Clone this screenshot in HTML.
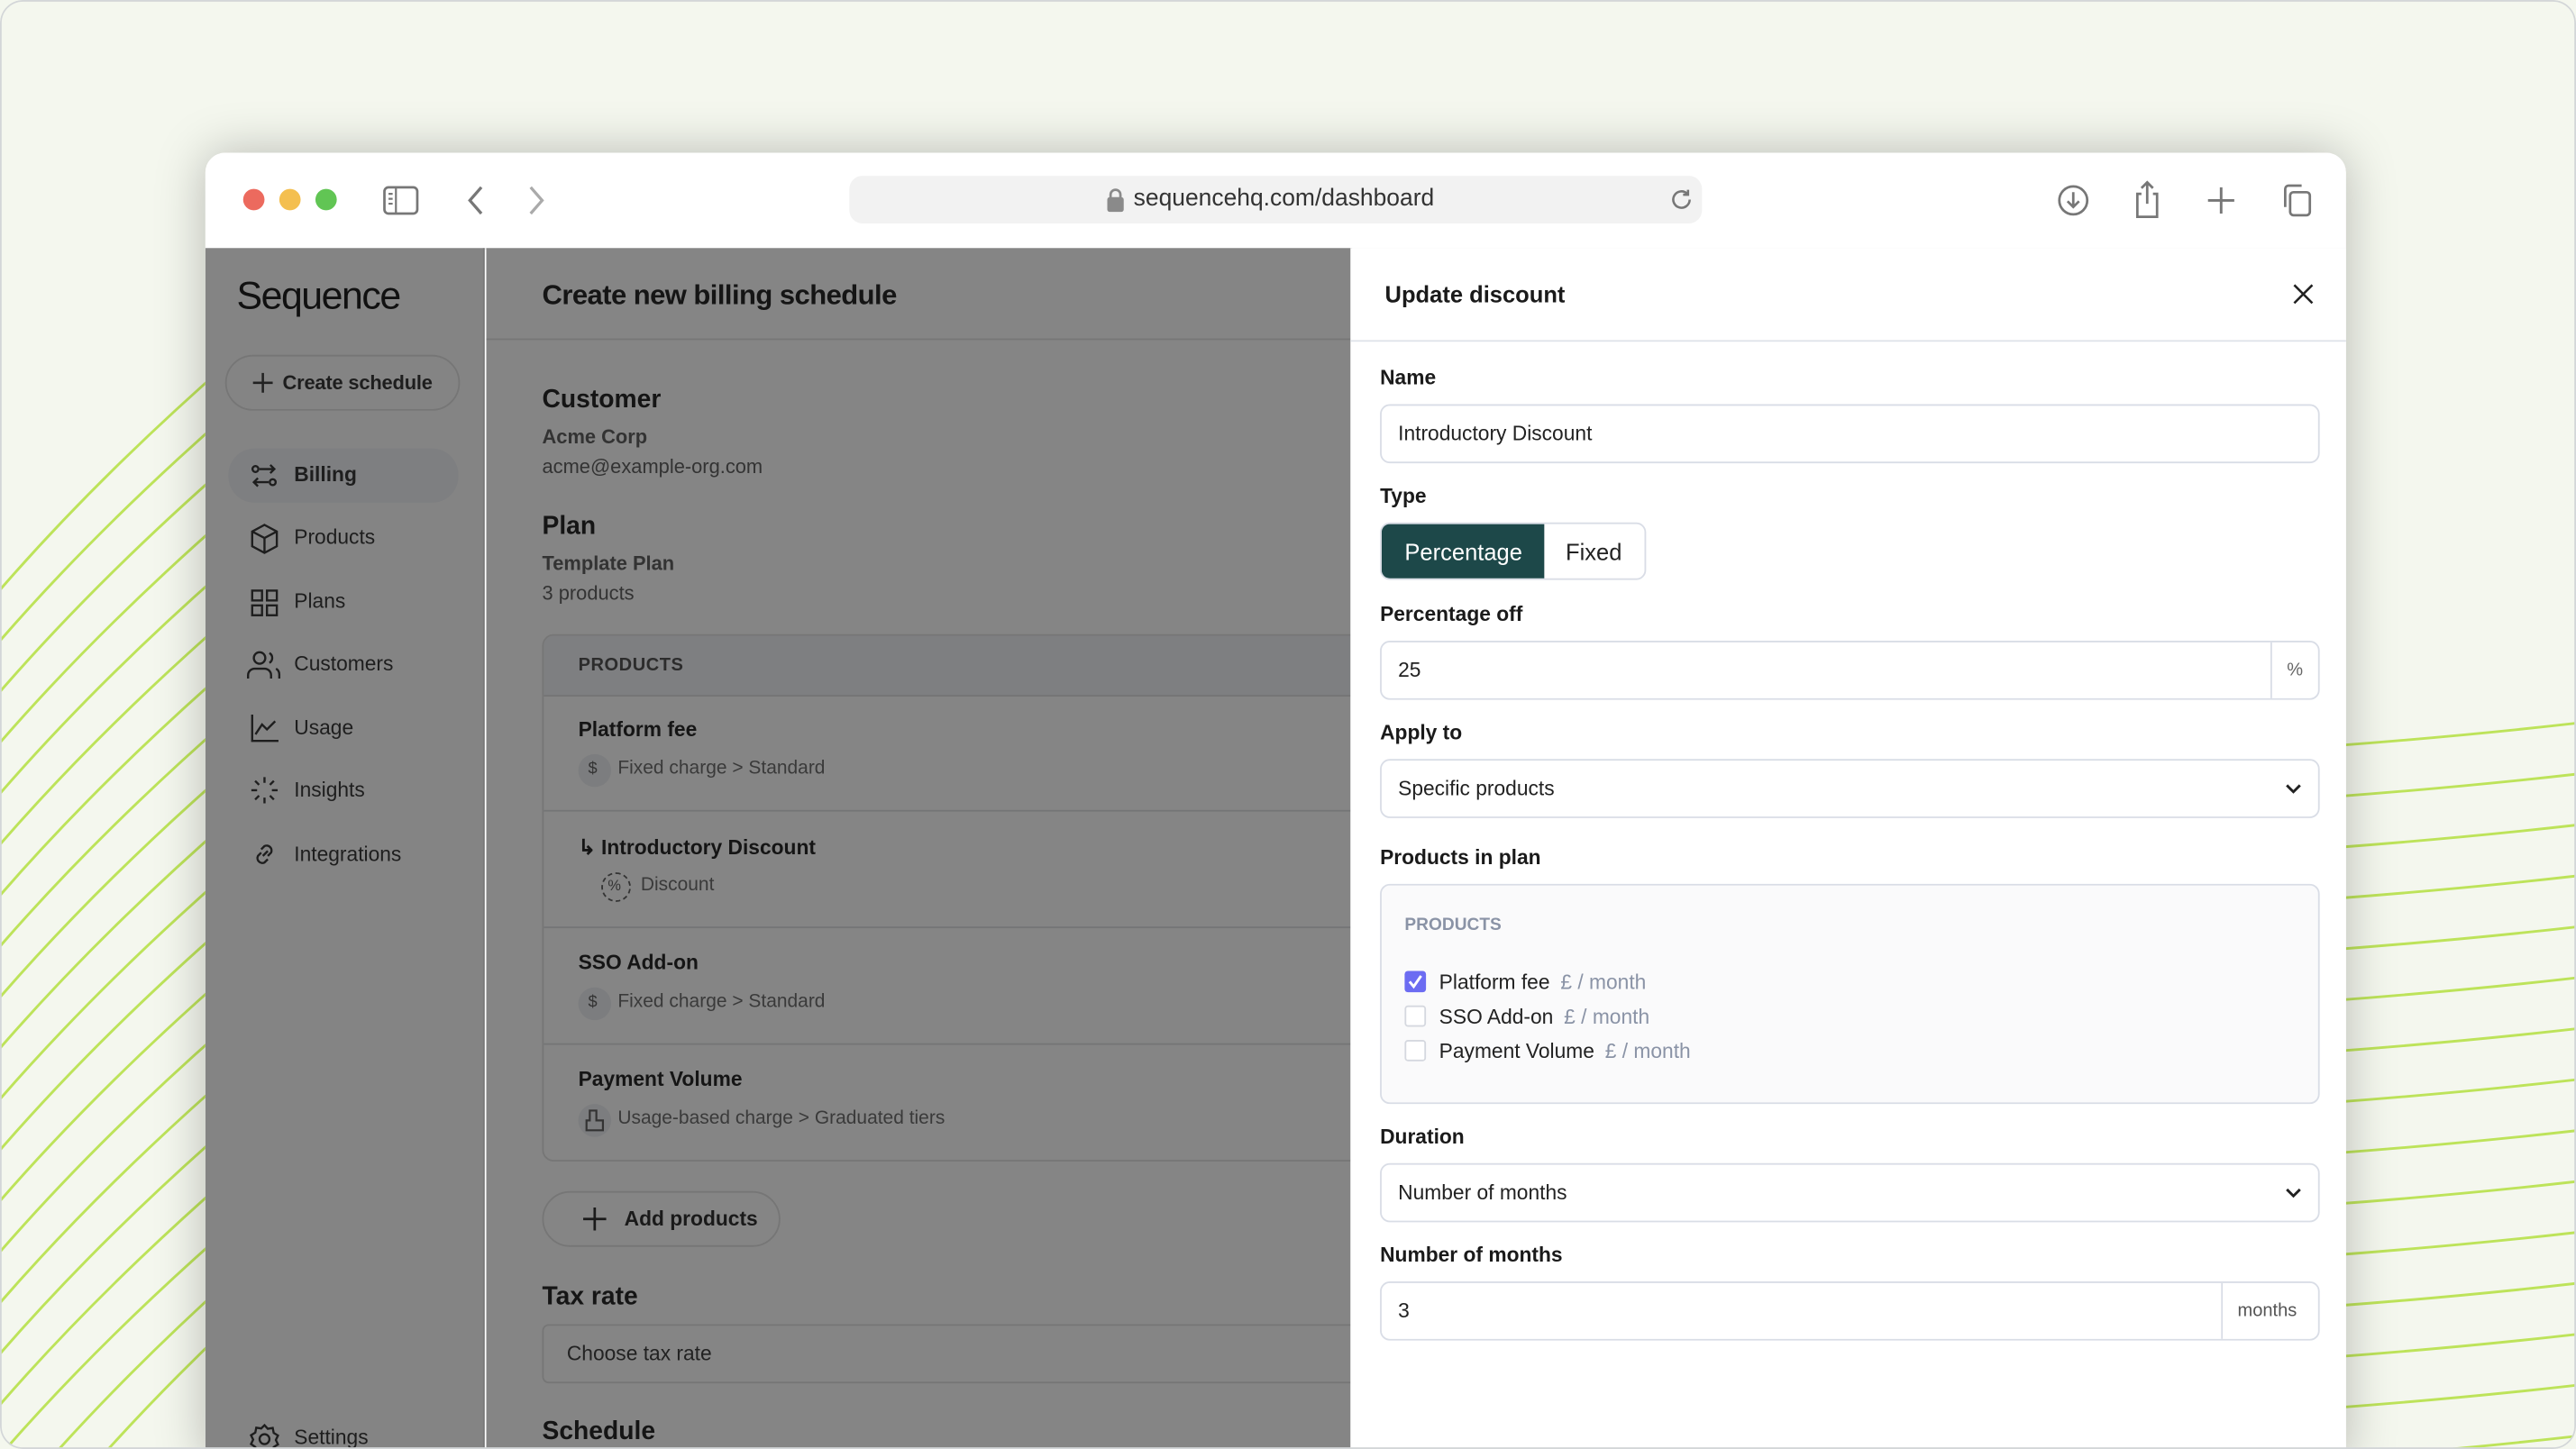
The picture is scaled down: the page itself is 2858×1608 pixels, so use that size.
<!DOCTYPE html>
<html><head><meta charset="utf-8"><style>
*{box-sizing:border-box;margin:0;padding:0}
html,body{width:2858px;height:1608px;overflow:hidden;background:#f4f7ee}
#s{position:absolute;left:0;top:0;width:1568px;height:882px;transform:scale(1.82270,1.82313);transform-origin:0 0;font-family:"Liberation Sans",sans-serif;color:#1c1c1c;border-radius:14px;overflow:hidden;background:#f4f7ee}
#fr{position:absolute;left:0;top:0;width:1568px;height:882px;border:1px solid #d3d6d8;border-radius:14px;pointer-events:none}
.a{position:absolute}
.win{left:125px;top:93px;width:1303px;height:800px;border-radius:12px;overflow:hidden;background:#fff;box-shadow:0 0 30px rgba(0,0,0,.25)}
.t{position:absolute;white-space:nowrap}
.nav{left:179px;font-size:12.5px;color:#1e1e1e}
.lbl{left:840px;font-size:12.5px;font-weight:bold;color:#1a1a1a}
.inp{left:840px;width:572px;height:36px;border:1px solid #d9dde6;border-radius:6px;background:#fff}
.inp span{position:absolute;left:10px;top:10px;font-size:12.5px;color:#222}
.row{position:absolute;left:0;right:0;border-top:1px solid #747576}
</style></head><body><div id="s">
<svg class="a" style="left:0;top:0" width="1568" height="882">
<g stroke="#bde35a" stroke-width="1.6" fill="none">
<path d="M0 359 Q60 290 140 220"/><path d="M0 390 Q60 321 140 251"/><path d="M0 421 Q60 352 140 282"/><path d="M0 452 Q60 383 140 313"/><path d="M0 483 Q60 414 140 344"/><path d="M0 514 Q60 445 140 375"/><path d="M0 545 Q60 476 140 406"/><path d="M0 576 Q60 507 140 437"/><path d="M0 607 Q60 538 140 468"/><path d="M0 638 Q60 569 140 499"/><path d="M0 669 Q60 600 140 530"/><path d="M0 700 Q60 631 140 561"/><path d="M0 731 Q60 662 140 592"/><path d="M0 762 Q60 693 140 623"/><path d="M0 793 Q60 724 140 654"/><path d="M0 824 Q60 755 140 685"/><path d="M0 855 Q60 786 140 716"/><path d="M0 886 Q60 817 140 747"/><path d="M20 900 Q80 831 160 761"/><path d="M50 900 Q110 831 190 761"/>
<path d="M1420 454 Q1500 448 1570 440"/><path d="M1420 485 Q1500 479 1570 471"/><path d="M1420 516 Q1500 510 1570 502"/><path d="M1420 547 Q1500 541 1570 533"/><path d="M1420 578 Q1500 572 1570 564"/><path d="M1420 609 Q1500 603 1570 595"/><path d="M1420 640 Q1500 634 1570 626"/><path d="M1420 671 Q1500 665 1570 657"/><path d="M1420 702 Q1500 696 1570 688"/><path d="M1420 733 Q1500 727 1570 719"/><path d="M1420 764 Q1500 758 1570 750"/><path d="M1420 795 Q1500 789 1570 781"/><path d="M1420 826 Q1500 820 1570 812"/><path d="M1420 857 Q1500 851 1570 843"/><path d="M1420 888 Q1500 882 1570 874"/>
</g></svg>
<div class="a win">
 <div class="a" style="left:0;top:0;width:1303px;height:58px;background:#fff"></div>
 <div class="a" style="left:23px;top:22px;width:13px;height:13px;border-radius:50%;background:#ec6a5e"></div>
 <div class="a" style="left:45px;top:22px;width:13px;height:13px;border-radius:50%;background:#f4bf4f"></div>
 <div class="a" style="left:67px;top:22px;width:13px;height:13px;border-radius:50%;background:#61c554"></div>
 <svg class="a" style="left:107px;top:19px" width="24" height="20" fill="none" stroke="#777" stroke-width="1.5"><rect x="2" y="2" width="20" height="16" rx="2.5"/><path d="M9 2v16M4.5 6h2.5M4.5 9h2.5M4.5 12h2.5" stroke-width="1.2"/></svg>
 <svg class="a" style="left:158px;top:19px" width="14" height="20" fill="none" stroke="#777" stroke-width="1.8"><path d="M10 2L3 10l7 8"/></svg>
 <svg class="a" style="left:194px;top:19px" width="14" height="20" fill="none" stroke="#aaa" stroke-width="1.8"><path d="M4 2l7 8-7 8"/></svg>
 <div class="a" style="left:392px;top:14px;width:519px;height:29px;border-radius:8px;background:#f2f2f2"></div>
 <svg class="a" style="left:548px;top:21px" width="12" height="16" fill="#8a8a8a"><rect x="1" y="6" width="10" height="9" rx="1.5"/><path d="M3 7V4.5a3 3 0 0 1 6 0V7" fill="none" stroke="#8a8a8a" stroke-width="1.5"/></svg>
 <div class="t" style="left:565px;top:20px;font-size:14.5px;color:#333">sequencehq.com/dashboard</div>
 <svg class="a" style="left:891px;top:21px" width="15" height="15" fill="none" stroke="#777" stroke-width="1.4"><path d="M12.5 7.5a5 5 0 1 1-1.6-3.7"/><path d="M11.5 1.5v3h-3"/></svg>
 <svg class="a" style="left:1126px;top:18px" width="22" height="22" fill="none" stroke="#777" stroke-width="1.5"><circle cx="11" cy="11" r="8.5"/><path d="M11 6v9M7.5 11.5L11 15l3.5-3.5"/></svg>
 <svg class="a" style="left:1172px;top:16px" width="20" height="26" fill="none" stroke="#777" stroke-width="1.5"><path d="M6.5 9H4v14h12V9h-2.5M10 2v13M6.5 5.5L10 2l3.5 3.5"/></svg>
 <svg class="a" style="left:1217px;top:19px" width="20" height="20" fill="none" stroke="#777" stroke-width="1.6"><path d="M10 2v16M2 10h16"/></svg>
 <svg class="a" style="left:1262px;top:18px" width="22" height="22" fill="none" stroke="#777" stroke-width="1.5"><path d="M4 15V4a2 2 0 0 1 2-2h8"/><rect x="7" y="6" width="12" height="14" rx="2"/></svg>
 <div class="a" style="left:0;top:58px;width:1303px;height:1px;background:#e8e8e8"></div>

 <div class="a" style="left:0;top:58px;width:170px;height:760px;background:#848484;border-right:1px solid #797979"></div>
 <div class="t" style="left:19px;top:74px;font-size:23.5px;color:#111;letter-spacing:-.8px">Sequence</div>
 <div class="a" style="left:12px;top:123px;width:143px;height:34px;border:1px solid #767676;border-radius:17px"></div>
 <svg class="a" style="left:27px;top:132px" width="16" height="16" fill="none" stroke="#222" stroke-width="1.4"><path d="M8 2v12M2 8h12"/></svg>
 <div class="t" style="left:47px;top:133px;font-size:12px;font-weight:bold;color:#1e1e1e;letter-spacing:-.1px">Create schedule</div>
 <div class="a" style="left:14px;top:180px;width:140px;height:33px;border-radius:16px;background:#7e7f81"></div>
 <svg class="a" style="left:27px;top:188px" width="18" height="18" fill="none" stroke="#1e1e1e" stroke-width="1.3"><circle cx="3.5" cy="4.5" r="1.8"/><path d="M6 4.5h9M12.5 2l2.5 2.5-2.5 2.5"/><circle cx="14" cy="12.5" r="1.8"/><path d="M11.5 12.5h-9M5 10l-2.5 2.5L5 15"/></svg>
 <div class="t nav" style="left:54px;top:189px;font-weight:bold">Billing</div>
 <svg class="a" style="left:27px;top:225px" width="18" height="20" fill="none" stroke="#1e1e1e" stroke-width="1.3"><path d="M9 1.5l7.5 4v9L9 18.5 1.5 14.5v-9zM1.5 5.5L9 9.5l7.5-4M9 9.5v9"/></svg>
 <div class="t nav" style="left:54px;top:227px">Products</div>
 <svg class="a" style="left:27px;top:265px" width="18" height="18" fill="none" stroke="#1e1e1e" stroke-width="1.3"><rect x="1.5" y="1.5" width="6" height="6"/><rect x="10.5" y="1.5" width="6" height="6"/><rect x="1.5" y="10.5" width="6" height="6"/><rect x="10.5" y="10.5" width="6" height="6"/></svg>
 <div class="t nav" style="left:54px;top:266px">Plans</div>
 <svg class="a" style="left:25px;top:302px" width="22" height="20" fill="none" stroke="#1e1e1e" stroke-width="1.3"><circle cx="8" cy="5.5" r="3.5"/><path d="M1 18v-2a4 4 0 0 1 4-4h6a4 4 0 0 1 4 4v2M14 2.5a3.5 3.5 0 0 1 0 6M18 12a4 4 0 0 1 2 3.5V18"/></svg>
 <div class="t nav" style="left:54px;top:304px">Customers</div>
 <svg class="a" style="left:27px;top:341px" width="18" height="18" fill="none" stroke="#1e1e1e" stroke-width="1.3"><path d="M1.5 1v16h16M3.5 13l4-6 3 3 5-5"/></svg>
 <div class="t nav" style="left:54px;top:343px">Usage</div>
 <svg class="a" style="left:27px;top:379px" width="18" height="18" fill="none" stroke="#1e1e1e" stroke-width="1.3"><path d="M9 1v3.5M9 13.5V17M1 9h3.5M13.5 9H17M3.3 3.3l2.4 2.4M12.3 12.3l2.4 2.4M3.3 14.7l2.4-2.4M12.3 5.7l2.4-2.4"/></svg>
 <div class="t nav" style="left:54px;top:381px">Insights</div>
 <svg class="a" style="left:28px;top:419px" width="16" height="16" fill="none" stroke="#1e1e1e" stroke-width="1.3"><path d="M7 9l3-3M6 5l2-2a3 3 0 0 1 4 4l-2 2M10 11l-2 2a3 3 0 0 1-4-4l2-2"/></svg>
 <div class="t nav" style="left:54px;top:420px">Integrations</div>
 <svg class="a" style="left:26px;top:773px" width="20" height="20" fill="none" stroke="#1e1e1e" stroke-width="1.3"><circle cx="10" cy="10" r="3"/><path d="M10 1.5l2 2.2 3-.5.6 3 2.6 1.6-1.3 2.7 1.3 2.7-2.6 1.6-.6 3-3-.5-2 2.2-2-2.2-3 .5-.6-3L1.8 13l1.3-2.7L1.8 7.6l2.6-1.6.6-3 3 .5z"/></svg>
 <div class="t nav" style="left:54px;top:775px">Settings</div>

 <div class="a" style="left:171px;top:58px;width:527px;height:760px;background:#858585"></div>
 <div class="t" style="left:205px;top:77px;font-size:17px;font-weight:bold;color:#151515;letter-spacing:-.3px">Create new billing schedule</div>
 <div class="a" style="left:171px;top:113px;width:527px;height:1px;background:#777"></div>
 <div class="t" style="left:205px;top:142px;font-size:15.5px;font-weight:bold;color:#151515">Customer</div>
 <div class="t" style="left:205px;top:166px;font-size:12px;font-weight:bold;color:#333">Acme Corp</div>
 <div class="t" style="left:205px;top:184px;font-size:12px;color:#333">acme@example-org.com</div>
 <div class="t" style="left:205px;top:219px;font-size:15.5px;font-weight:bold;color:#151515">Plan</div>
 <div class="t" style="left:205px;top:243px;font-size:12px;font-weight:bold;color:#333">Template Plan</div>
 <div class="t" style="left:205px;top:261px;font-size:12px;color:#333">3 products</div>
 <div class="a" style="left:205px;top:293px;width:520px;height:321px;border:1px solid #767676;border-radius:7px;overflow:hidden">
  <div class="a" style="left:0;top:0;right:0;height:37px;background:#7e7f81;border-bottom:1px solid #757575"></div>
  <div class="t" style="left:21px;top:12px;font-size:11px;font-weight:bold;color:#2c2c2c;letter-spacing:.3px">PRODUCTS</div>
  <div class="t" style="left:21px;top:50px;font-size:12.5px;font-weight:bold;color:#151515">Platform fee</div>
  <div class="a" style="left:21px;top:72px;width:20px;height:20px;border-radius:50%;background:#7c7d7f"></div>
  <div class="t" style="left:27px;top:76px;font-size:10px;color:#333">$</div>
  <div class="t" style="left:45px;top:75px;font-size:11.5px;color:#3a3a3a">Fixed charge &gt; Standard</div>
  <div class="row" style="top:106px"></div>
  <div class="t" style="left:21px;top:121px;font-size:12.5px;font-weight:bold;color:#151515">↳ Introductory Discount</div>
  <div class="a" style="left:35px;top:144px;width:18px;height:18px;border-radius:50%;border:1.3px dashed #333"></div>
  <div class="t" style="left:39px;top:147px;font-size:9px;color:#333">%</div>
  <div class="t" style="left:59px;top:146px;font-size:11.5px;color:#3a3a3a">Discount</div>
  <div class="row" style="top:177px"></div>
  <div class="t" style="left:21px;top:192px;font-size:12.5px;font-weight:bold;color:#151515">SSO Add-on</div>
  <div class="a" style="left:21px;top:214px;width:20px;height:20px;border-radius:50%;background:#7c7d7f"></div>
  <div class="t" style="left:27px;top:218px;font-size:10px;color:#333">$</div>
  <div class="t" style="left:45px;top:217px;font-size:11.5px;color:#3a3a3a">Fixed charge &gt; Standard</div>
  <div class="row" style="top:248px"></div>
  <div class="t" style="left:21px;top:263px;font-size:12.5px;font-weight:bold;color:#151515">Payment Volume</div>
  <div class="a" style="left:21px;top:285px;width:20px;height:20px;border-radius:50%;background:#7c7d7f"></div>
  <svg class="a" style="left:25px;top:288px" width="12" height="14" fill="none" stroke="#333" stroke-width="1.2"><path d="M3 1h4v6h4v6H1V7h2z"/></svg>
  <div class="t" style="left:45px;top:288px;font-size:11.5px;color:#3a3a3a">Usage-based charge &gt; Graduated tiers</div>
 </div>
 <div class="a" style="left:205px;top:632px;width:145px;height:34px;border:1px solid #767676;border-radius:17px"></div>
 <svg class="a" style="left:228px;top:640px" width="18" height="18" fill="none" stroke="#1a1a1a" stroke-width="1.5"><path d="M9 2v14M2 9h14"/></svg>
 <div class="t" style="left:255px;top:642px;font-size:12.5px;font-weight:bold;color:#1a1a1a">Add products</div>
 <div class="t" style="left:205px;top:688px;font-size:15.5px;font-weight:bold;color:#151515">Tax rate</div>
 <div class="a" style="left:205px;top:713px;width:520px;height:36px;border:1px solid #767676;border-radius:4px"></div>
 <div class="t" style="left:220px;top:724px;font-size:12.5px;color:#222">Choose tax rate</div>
 <div class="t" style="left:205px;top:770px;font-size:15.5px;font-weight:bold;color:#151515">Schedule</div>
</div>

<div class="a" style="left:822px;top:151px;width:606px;height:740px;background:#fff"></div>
<div class="t" style="left:843px;top:171px;font-size:14px;font-weight:bold;color:#1a1a1a">Update discount</div>
<svg class="a" style="left:1395px;top:172px" width="14" height="14" fill="none" stroke="#222" stroke-width="1.4"><path d="M1.5 1.5l11 11M12.5 1.5l-11 11"/></svg>
<div class="a" style="left:822px;top:207px;width:606px;height:1px;background:#dfe3ea"></div>
<div class="t lbl" style="top:223px">Name</div>
<div class="a inp" style="top:246px"><span>Introductory Discount</span></div>
<div class="t lbl" style="top:295px">Type</div>
<div class="a" style="left:840px;top:318px;width:162px;height:35px;border:1px solid #d9dde6;border-radius:6px;overflow:hidden">
 <div class="a" style="left:0;top:0;width:99px;height:35px;background:#1d4849"></div>
 <div class="t" style="left:14px;top:9px;font-size:14px;color:#fff">Percentage</div>
 <div class="t" style="left:112px;top:9px;font-size:14px;color:#222">Fixed</div>
</div>
<div class="t lbl" style="top:367px">Percentage off</div>
<div class="a inp" style="top:390px"><span>25</span><div class="a" style="left:541px;top:0;width:1px;height:34px;background:#d9dde6"></div><div class="t" style="left:551px;top:11px;font-size:11px;color:#666">%</div></div>
<div class="t lbl" style="top:439px">Apply to</div>
<div class="a inp" style="top:462px"><span>Specific products</span><svg class="a" style="left:549px;top:13px" width="12" height="9" fill="none" stroke="#222" stroke-width="1.6"><path d="M2 2l4 4 4-4"/></svg></div>
<div class="t lbl" style="top:515px">Products in plan</div>
<div class="a" style="left:840px;top:538px;width:572px;height:134px;border:1px solid #d9dde6;border-radius:6px;background:#fafafb"></div>
<div class="t" style="left:855px;top:557px;font-size:10.5px;font-weight:bold;color:#8a93a6">PRODUCTS</div>
<div class="a" style="left:855px;top:591px;width:13px;height:13px;border-radius:2px;background:#6c6cf2"></div>
<svg class="a" style="left:856px;top:592px" width="11" height="11" fill="none" stroke="#fff" stroke-width="1.6"><path d="M2 5.5l2.5 3L9 2"/></svg>
<div class="t" style="left:876px;top:591px;font-size:12.5px;color:#222">Platform fee <span style="color:#8a93a6;margin-left:3px">£ / month</span></div>
<div class="a" style="left:855px;top:612px;width:13px;height:13px;border-radius:2px;border:1px solid #d5d8df;background:#fff"></div>
<div class="t" style="left:876px;top:612px;font-size:12.5px;color:#222">SSO Add-on <span style="color:#8a93a6;margin-left:3px">£ / month</span></div>
<div class="a" style="left:855px;top:633px;width:13px;height:13px;border-radius:2px;border:1px solid #d5d8df;background:#fff"></div>
<div class="t" style="left:876px;top:633px;font-size:12.5px;color:#222">Payment Volume <span style="color:#8a93a6;margin-left:3px">£ / month</span></div>
<div class="t lbl" style="top:685px">Duration</div>
<div class="a inp" style="top:708px"><span>Number of months</span><svg class="a" style="left:549px;top:13px" width="12" height="9" fill="none" stroke="#222" stroke-width="1.6"><path d="M2 2l4 4 4-4"/></svg></div>
<div class="t lbl" style="top:757px">Number of months</div>
<div class="a inp" style="top:780px"><span>3</span><div class="a" style="left:511px;top:0;width:1px;height:34px;background:#d9dde6"></div><div class="t" style="left:521px;top:11px;font-size:11px;color:#555">months</div></div>
<div id="fr"></div>
</div></body></html>
